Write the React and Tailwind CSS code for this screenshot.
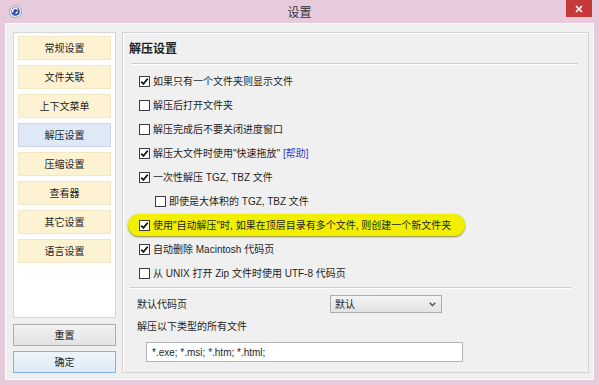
import React from "react";

const FONT = { fontFamily: '"Liberation Sans", "Noto Sans CJK SC", sans-serif' };

function Box({ checked }) {
  return (
    <span className="flex h-[11px] w-[11px] shrink-0 items-center justify-center border border-[#3c3c3c] bg-white">
      {checked && (
        <svg width="9" height="9" viewBox="0 0 9 9">
          <path d="M1.2 4.6 L3.4 6.9 L7.8 1.6" fill="none" stroke="#1a1a1a" strokeWidth="1.7" />
        </svg>
      )}
    </span>
  );
}

function Row({ checked, children, indent }) {
  return (
    <div className={`flex h-[24px] items-center gap-[3px] ${indent ? "pl-[32px]" : "pl-[16px]"}`}>
      <Box checked={checked} />
      <span className="whitespace-nowrap">{children}</span>
    </div>
  );
}

const navItems = ["常规设置", "文件关联", "上下文菜单", "解压设置", "压缩设置", "查看器", "其它设置", "语言设置"];

export default function App() {
  return (
    <div className="flex h-[385px] w-[599px] flex-col bg-[#e7cadb] text-[10px] text-[#1e1e1e]" style={FONT}>
      {/* title bar */}
      <div className="flex h-[23px] items-start">
        <div className="flex w-[70px] items-center pl-[9px] pt-[5px]">
          <svg width="13" height="13" viewBox="0 0 13 13">
            <circle cx="6.5" cy="6.5" r="6" fill="#f4f4fb" stroke="#8a8fb8" strokeWidth="0.8" />
            <circle cx="6.5" cy="6.5" r="4.3" fill="#2e49a8" />
            <path d="M4 7.5 A2.6 2.6 0 0 1 8.6 4.8" fill="none" stroke="#ffffff" strokeWidth="1.4" />
            <path d="M8.8 6 L6.6 8.8" stroke="#ffffff" strokeWidth="1.2" />
          </svg>
        </div>
        <div className="flex-1 pt-[4px] text-center text-[12px] text-[#333]">设置</div>
        <div className="flex w-[70px] justify-end pr-[7px]">
          <div className="flex h-[17px] w-[26px] items-center justify-center bg-[#c6393b]">
            <svg width="8" height="8" viewBox="0 0 8 8">
              <path d="M1 1 L7 7 M7 1 L1 7" stroke="#ffffff" strokeWidth="1.6" />
            </svg>
          </div>
        </div>
      </div>

      {/* body */}
      <div className="mx-[5px] mb-[5px] flex flex-1 border border-[#fafafa] bg-[#f0eff0] pl-[7px] pt-[8px]">
        {/* sidebar */}
        <div className="flex w-[103px] flex-col">
          <div className="flex h-[286px] flex-col gap-[5px] border border-[#d6d6d6] bg-white px-[4px] pt-[3px]">
            {navItems.map((t, i) => (
              <div
                key={t}
                className={`flex h-[24px] items-center justify-center border ${
                  i === 3 ? "border-[#cad7ea] bg-[#dfe8f5]" : "border-[#f3e8c6] bg-[#fdf2d2]"
                }`}
              >
                {t}
              </div>
            ))}
          </div>
          <div className="mt-[6px] flex h-[22px] items-center justify-center border border-[#adadad] bg-gradient-to-b from-[#f2f2f2] to-[#e2e2e2]">
            重置
          </div>
          <div className="mt-[5px] flex h-[22px] items-center justify-center border border-[#7fb2e6] bg-gradient-to-b from-[#eef5fc] to-[#dfeaf6]">
            确定
          </div>
        </div>

        {/* main panel */}
        <div className="ml-[6px] flex h-[341px] w-[467px] flex-col border border-[#d4d4d4] bg-[#f0f0f0] shadow-[inset_1px_1px_0_#ffffff]">
          <div className="pl-[6px] pt-[8px] text-[12px] font-bold leading-[16px]">解压设置</div>
          <div className="ml-[8px] mr-[10px] mt-[6px] h-[2px] border-t border-[#cfcfcf]" style={{ borderBottom: "1px solid #ffffff" }} />
          <div className="mt-[4px] flex flex-col">
            <Row checked>如果只有一个文件夹则显示文件</Row>
            <Row>解压后打开文件夹</Row>
            <Row>解压完成后不要关闭进度窗口</Row>
            <Row checked>
              解压大文件时使用"快速拖放" <span className="text-[#2f3fc6]">[帮助]</span>
            </Row>
            <Row checked>一次性解压 TGZ, TBZ 文件</Row>
            <Row indent>即使是大体积的 TGZ, TBZ 文件</Row>
            <div className="flex h-[24px] items-center pl-[5px]">
              <div className="flex h-[22px] items-center gap-[3px] rounded-full bg-[#f2f000] pl-[11px] pr-[14px] shadow-[0_1px_2px_#8a8a20]">
                <Box checked />
                <span className="whitespace-nowrap">使用"自动解压"时, 如果在顶层目录有多个文件, 则创建一个新文件夹</span>
              </div>
            </div>
            <Row checked>自动删除 Macintosh 代码页</Row>
            <Row>从 UNIX 打开 Zip 文件时使用 UTF-8 代码页</Row>
          </div>
          <div className="ml-[7px] mr-[17px] mt-[2px] h-[2px] border-t border-[#cfcfcf]" style={{ borderBottom: "1px solid #ffffff" }} />
          <div className="mt-[6px] flex h-[18px] items-center pl-[14px]">
            <span className="w-[193px]">默认代码页</span>
            <div className="flex h-[18px] w-[112px] items-center justify-between border border-[#acacac] bg-gradient-to-b from-[#f3f3f3] to-[#e3e3e3] pl-[4px] pr-[5px]">
              <span>默认</span>
              <svg width="7" height="5" viewBox="0 0 7 5">
                <path d="M0.8 0.8 L3.5 3.6 L6.2 0.8" fill="none" stroke="#444" strokeWidth="1.3" />
              </svg>
            </div>
          </div>
          <div className="mt-[7px] pl-[14px] leading-[14px]">解压以下类型的所有文件</div>
          <div className="ml-[23px] mt-[8px] flex h-[20px] w-[317px] items-center border border-[#b5b5b5] bg-white pl-[5px]">
            *.exe; *.msi; *.htm; *.html;
          </div>
        </div>
      </div>
    </div>
  );
}
